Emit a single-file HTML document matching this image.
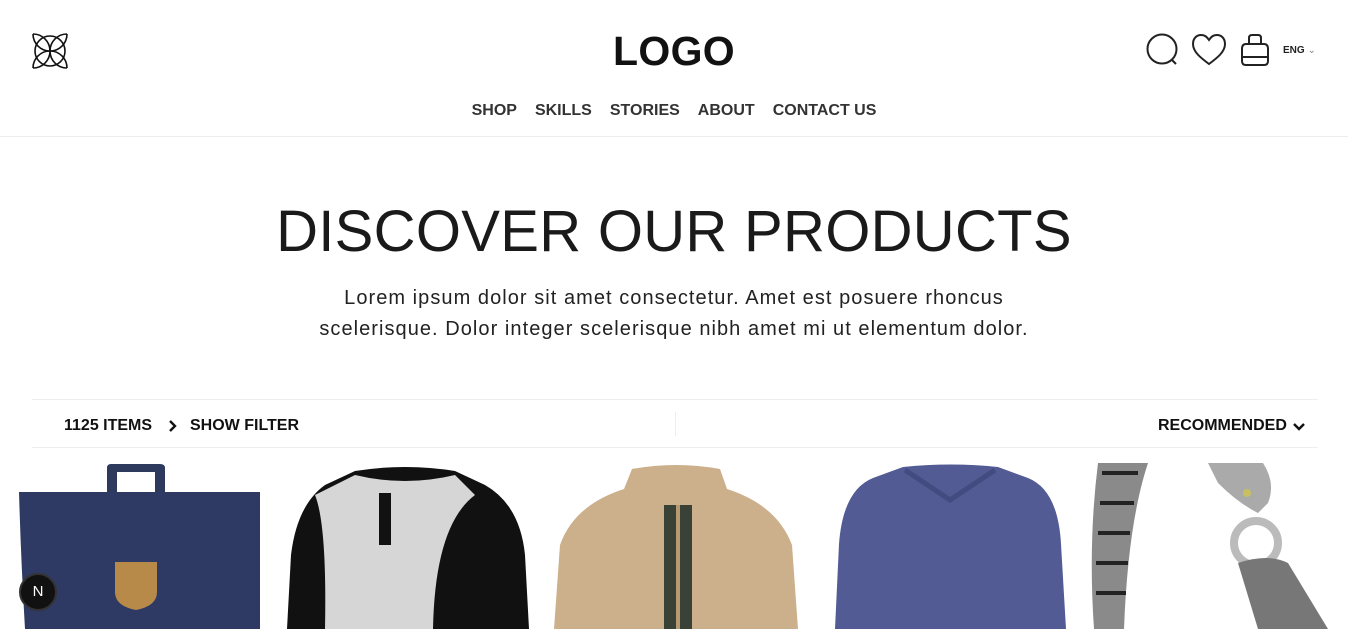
<!DOCTYPE html>
<html><head><meta charset="utf-8"><style>
*{margin:0;padding:0;box-sizing:border-box}
body{width:1348px;height:629px;overflow:hidden;background:#fff;font-family:"Liberation Sans",Arial,sans-serif;color:#1a1a1a;position:relative}
.abs{position:absolute}
.logo{left:0;width:1348px;top:28px;text-align:center;font-size:41px;font-weight:700;letter-spacing:0.3px;color:#111}
.nav{top:102px;left:0;width:1348px;text-align:center;font-size:16px;font-weight:700;color:#333}
.nav span{margin:0 9px}
.hr{left:0;width:1348px;top:136px;height:1px;background:#eee}
h1{position:absolute;top:198px;left:0;width:1348px;text-align:center;font-size:58px;font-weight:400;letter-spacing:0.3px;color:#1a1a1a}
.p{top:283px;left:0;width:1348px;text-align:center;font-size:20px;line-height:31px;color:#222;letter-spacing:1.05px}
.bar{left:32px;width:1286px;top:399px;height:49px;border-top:1px solid #eee;border-bottom:1px solid #eee}
.bar .t{position:absolute;top:17px;font-size:16px;font-weight:700;color:#111}
.eng{left:1283px;top:45px;font-size:10px;font-weight:700;color:#222}
</style></head><body>
<svg class="abs" style="left:31px;top:32px" width="38" height="38" viewBox="0 0 38 38" fill="none" stroke="#111" stroke-width="1.6">
<circle cx="19" cy="19" r="15"/>
<path d="M2 2 A17 17 0 0 0 36 2"/>
<path d="M2 36 A17 17 0 0 1 36 36"/>
<path d="M2 2 A17 17 0 0 1 2 36"/>
<path d="M36 2 A17 17 0 0 0 36 36"/>
</svg>
<div class="abs logo">LOGO</div>
<svg class="abs" style="left:1146px;top:33px" width="36" height="36" viewBox="0 0 36 36" fill="none" stroke="#222" stroke-width="2"><circle cx="16" cy="16" r="14.5"/><path d="M26 27 L30 31"/></svg>
<svg class="abs" style="left:1191px;top:34px" width="36" height="32" viewBox="0 0 36 32" fill="none" stroke="#222" stroke-width="2"><path d="M18 30 C10 24 2 18 2 10 C2 4 6 1 10 1 C14 1 16 3 18 6 C20 3 22 1 26 1 C30 1 34 4 34 10 C34 18 26 24 18 30Z"/></svg>
<svg class="abs" style="left:1240px;top:33px" width="30" height="34" viewBox="0 0 30 34" fill="none" stroke="#222" stroke-width="2"><path d="M9 12 V5 Q9 2 12 2 H18 Q21 2 21 5 V12"/><path d="M6 11 H24 Q28 11 28 16 V28 Q28 32 24 32 H6 Q2 32 2 28 V16 Q2 11 6 11Z"/><path d="M3 24 H27"/></svg>
<div class="abs eng">ENG <span style="font-weight:400;color:#888">&#8964;</span></div>
<div class="abs nav"><span>SHOP</span><span>SKILLS</span><span>STORIES</span><span>ABOUT</span><span>CONTACT US</span></div>
<div class="abs hr"></div>
<h1>DISCOVER OUR PRODUCTS</h1>
<div class="abs p">Lorem ipsum dolor sit amet consectetur. Amet est posuere rhoncus<br>scelerisque. Dolor integer scelerisque nibh amet mi ut elementum dolor.</div>
<div class="abs bar">
<div class="t" style="left:32px">1125 ITEMS</div>
<svg class="abs" style="left:136px;top:19px" width="10" height="14" viewBox="0 0 10 14" fill="none" stroke="#111" stroke-width="2.4"><path d="M2 2 L7 7 L2 12"/></svg>
<div class="t" style="left:158px">SHOW FILTER</div>
<div class="abs" style="left:643px;top:12px;width:1px;height:24px;background:#eee"></div>
<div class="t" style="left:1126px">RECOMMENDED</div>
<svg class="abs" style="left:1260px;top:22px" width="14" height="10" viewBox="0 0 14 10" fill="none" stroke="#111" stroke-width="2.4"><path d="M2 2 L7 7 L12 2"/></svg>
</div>
<svg class="abs" style="left:15px;top:462px" width="250" height="167" viewBox="0 0 250 167">
<path d="M92 30 V6 Q92 2 96 2 H145 Q150 2 150 6 V30 H140 V10 H102 V30Z" fill="#2d3a5e"/>
<path d="M4 30 H245 V167 H10 Q6 100 4 30Z" fill="#2e3a63"/>
<path d="M100 100 H142 V130 Q142 144 121 148 Q100 144 100 130Z" fill="#b88a4a"/>
</svg>
<svg class="abs" style="left:285px;top:465px" width="245" height="164" viewBox="0 0 245 164">
<path d="M70 6 Q120 -2 170 6 L200 20 Q235 40 240 90 L244 164 H2 L6 90 Q12 40 40 20Z" fill="#111"/>
<path d="M70 10 Q120 22 170 10 L190 30 Q150 60 148 164 H40 Q42 60 30 30Z" fill="#d6d6d6"/>
<path d="M94 28 H106 V80 H94Z" fill="#111"/>
</svg>
<svg class="abs" style="left:552px;top:465px" width="248" height="164" viewBox="0 0 248 164">
<path d="M80 4 Q124 -4 168 4 L175 24 Q225 40 240 80 L246 164 H2 L8 80 Q22 40 72 24Z" fill="#ccb08b"/>
<path d="M112 40 H140 V164 H112Z" fill="#3a4136"/>
<path d="M126 40 V164" stroke="#b79a72" stroke-width="4"/>
</svg>
<svg class="abs" style="left:833px;top:464px" width="235" height="165" viewBox="0 0 235 165">
<path d="M70 3 Q118 -2 165 3 L195 14 Q225 26 228 80 L233 165 H2 L6 80 Q10 26 40 14Z" fill="#525b94"/>
<path d="M72 6 L117 36 L162 6" fill="none" stroke="#434b80" stroke-width="5"/>
</svg>
<svg class="abs" style="left:1088px;top:463px" width="245" height="166" viewBox="0 0 245 166">
<path d="M10 0 H60 Q40 60 36 166 H6 Q0 80 10 0Z" fill="#8a8a8a"/>
<path d="M14 10 H50 M12 40 H46 M10 70 H42 M8 100 H40 M8 130 H38" stroke="#222" stroke-width="4"/>
<path d="M120 0 H175 Q188 20 180 40 L170 50 Q150 40 130 20Z" fill="#aaa"/>
<circle cx="168" cy="80" r="22" fill="none" stroke="#bbb" stroke-width="8"/>
<path d="M150 100 Q180 90 200 100 L240 166 H170Z" fill="#777"/>
<circle cx="159" cy="30" r="4" fill="#c8c060"/>
</svg>
<div class="abs" style="left:19px;top:573px;width:38px;height:38px;border-radius:50%;background:#111;border:2px solid #333;color:#fff;font-size:15px;text-align:center;line-height:34px">N</div>
</body></html>
